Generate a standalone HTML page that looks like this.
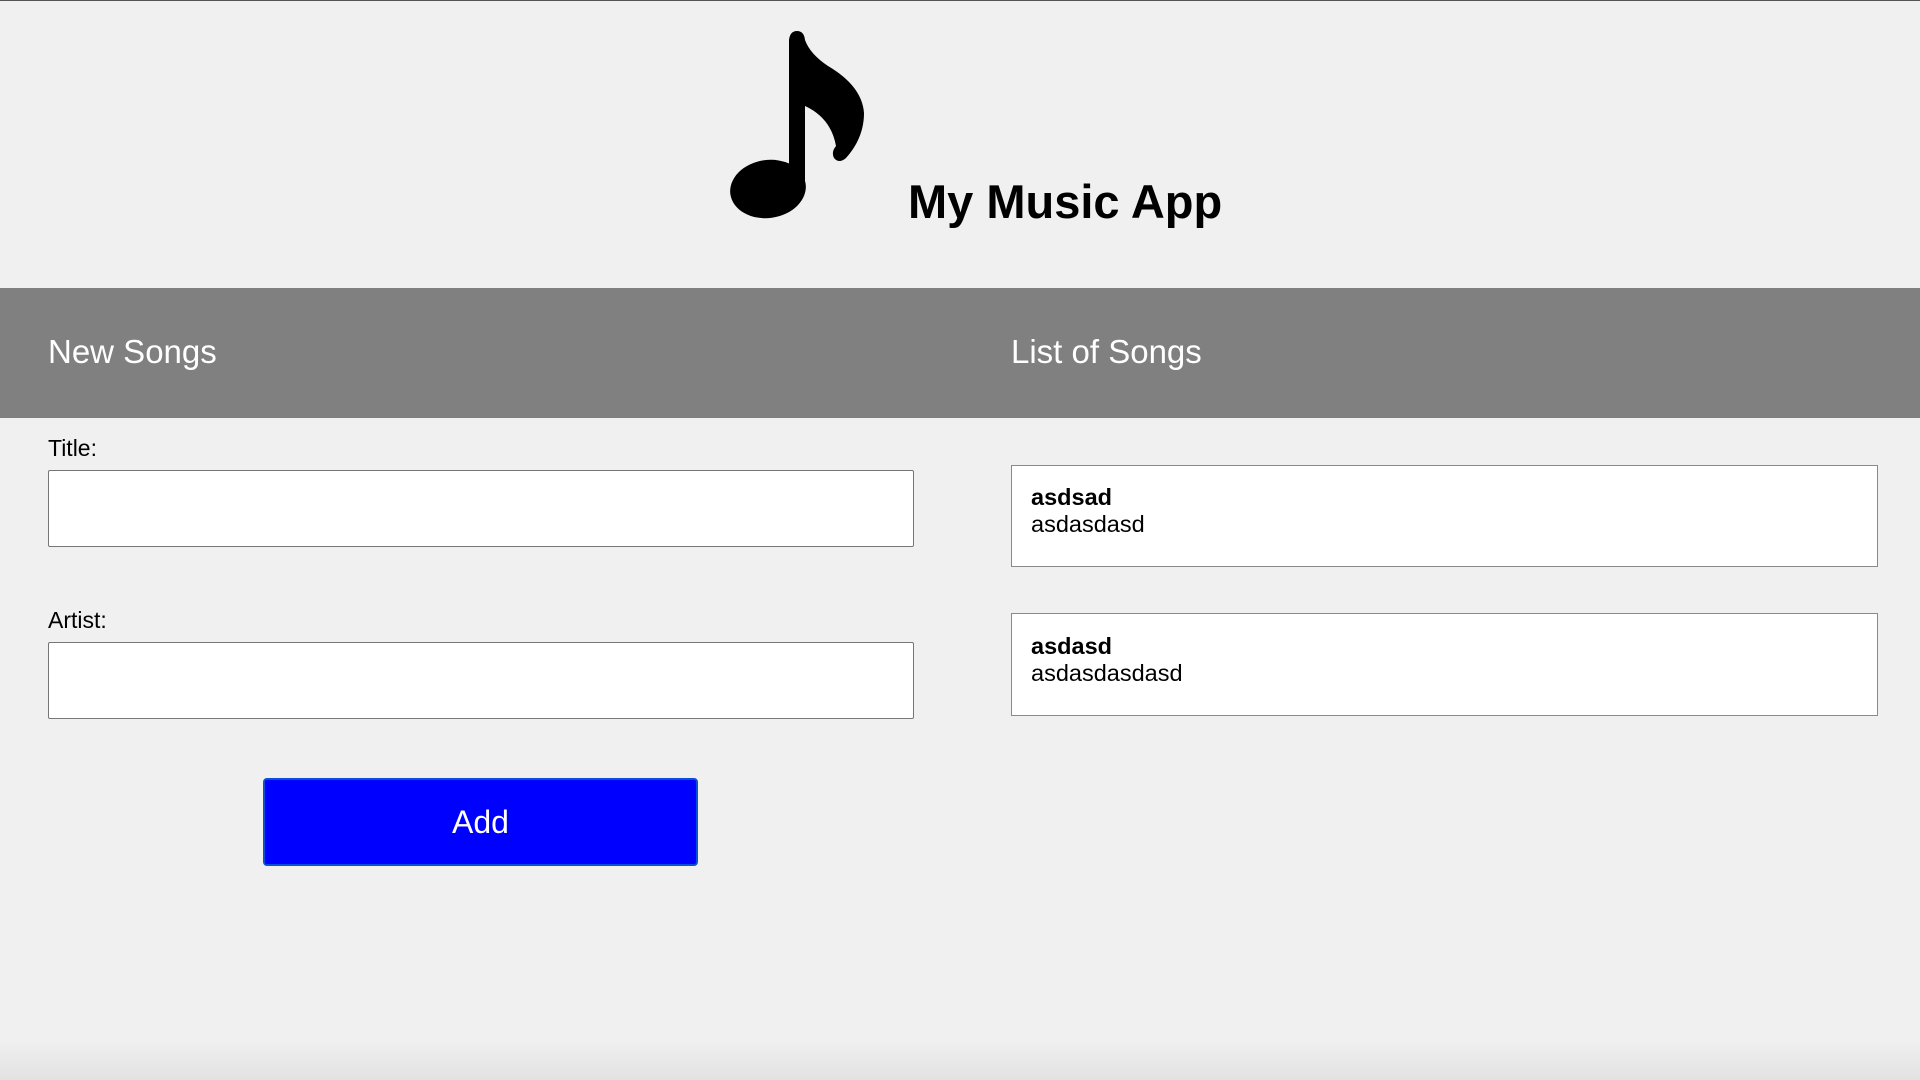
<!DOCTYPE html>
<html><head><meta charset="utf-8"><style>
html,body{margin:0;padding:0;}
body{width:1920px;height:1080px;background:#f0f0f0;position:relative;overflow:hidden;font-family:"Liberation Sans",Arial,sans-serif;color:#000;}
.topline{position:absolute;left:0;top:0;width:1920px;height:1px;background:#555;}
.t{position:absolute;white-space:nowrap;line-height:1;}
.band{position:absolute;left:0;top:288px;width:1920px;height:130px;background:#808080;}
.inp{position:absolute;left:48px;width:864px;background:#fff;border:1px solid #767676;border-radius:2px;}
.item{position:absolute;left:1011px;width:867px;background:#fff;border:1px solid #8a8a8a;box-sizing:border-box;}
.btn{position:absolute;left:263px;top:778px;width:435px;height:88px;box-sizing:border-box;background:#0000ff;border:2px solid #0a4fd6;border-radius:4px;color:#fff;font-size:32px;text-align:center;line-height:84px;}
.shade{position:absolute;left:0;top:1040px;width:1920px;height:40px;background:linear-gradient(#f0f0f0,#e2e2e2);}
</style></head><body>
<div class="topline"></div>
<svg style="position:absolute;left:0;top:0" width="1000" height="260">
<path d="M789 40 Q790 31 797 31 Q804 31 805 40 Q810 54 828 66 Q862 86 864 113 Q864 138 846 158 Q839 164 834 158 Q831 152 836 146 Q831 118 805 106 L805 188 L789 188 Z" fill="#000"/>
<ellipse cx="768" cy="189" rx="38" ry="29" transform="rotate(-8 768 189)" fill="#000"/>
</svg>
<div class="t" style="left:908px;top:178px;font-size:47px;font-weight:bold;">My Music App</div>
<div class="band"></div>
<div class="t" style="left:48px;top:335px;font-size:33px;color:#fff;">New Songs</div>
<div class="t" style="left:1011px;top:335px;font-size:33px;color:#fff;">List of Songs</div>
<div class="t" style="left:48px;top:437px;font-size:23px;">Title:</div>
<div class="inp" style="top:470px;height:75px;"></div>
<div class="t" style="left:48px;top:609px;font-size:23px;">Artist:</div>
<div class="inp" style="top:642px;height:75px;"></div>
<div class="btn">Add</div>
<div class="item" style="top:465px;height:102px;"></div>
<div class="t" style="left:1031px;top:486px;font-size:23.5px;font-weight:bold;">asdsad</div>
<div class="t" style="left:1031px;top:513px;font-size:23.5px;">asdasdasd</div>
<div class="item" style="top:613px;height:103px;"></div>
<div class="t" style="left:1031px;top:635px;font-size:23.5px;font-weight:bold;">asdasd</div>
<div class="t" style="left:1031px;top:662px;font-size:23.5px;">asdasdasdasd</div>
<div class="shade"></div>
</body></html>
